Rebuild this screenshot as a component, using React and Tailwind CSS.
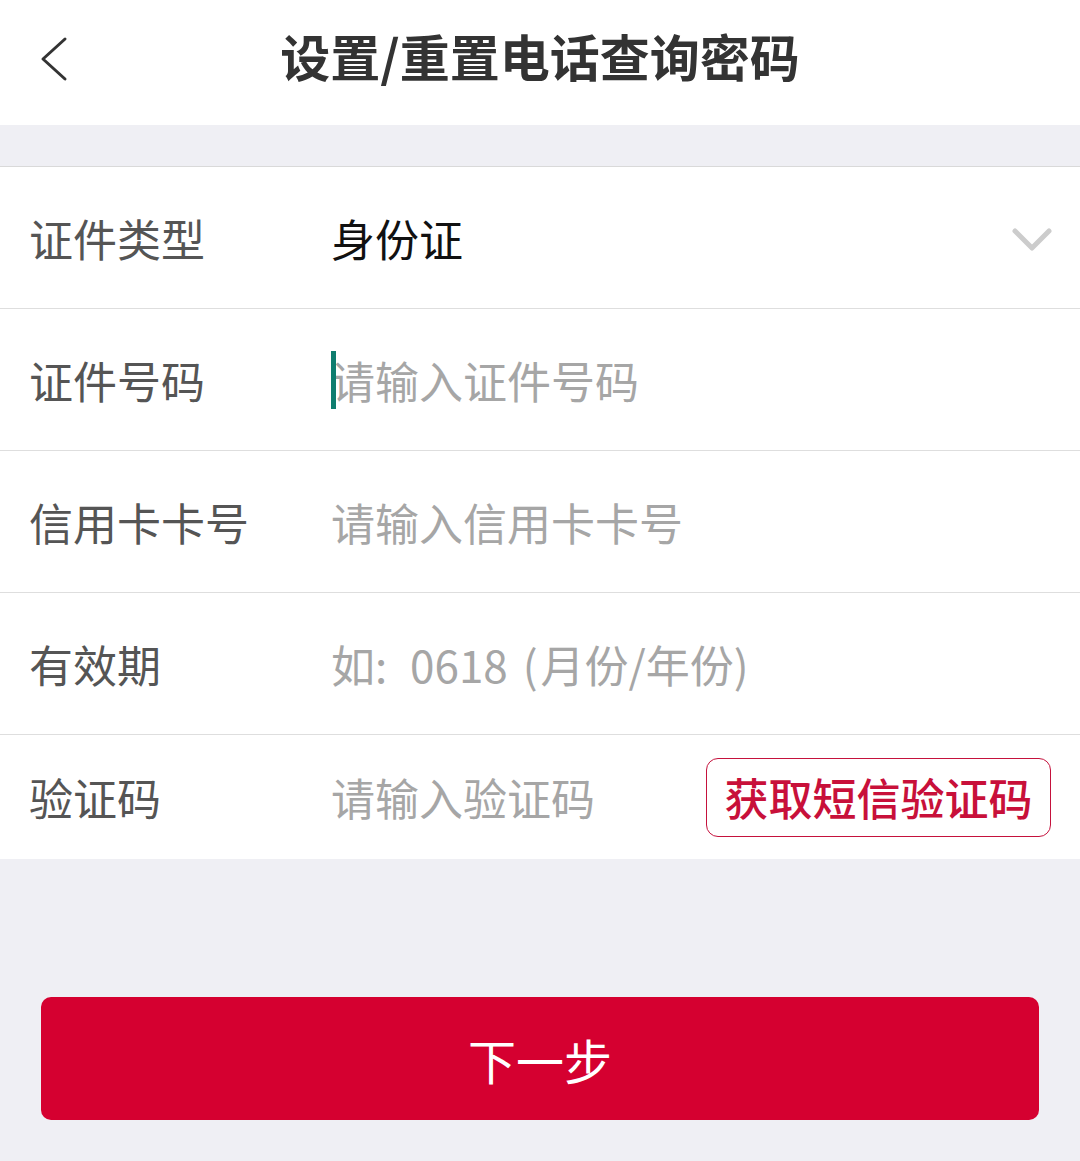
import React from "react";

const font = { fontFamily: '"Noto Sans CJK SC", "Noto Sans", sans-serif' };

function Row({ label, children, last }) {
  return (
    <div
      className={`flex items-center bg-white pl-[29px] ${
        last ? "h-[124px]" : "h-[142px] border-b border-[#dedede]"
      }`}
    >
      <div className="w-[302px] shrink-0 text-[44px] leading-none text-[#555555]">{label}</div>
      <div className="flex-1 flex items-center min-w-0">{children}</div>
    </div>
  );
}

export default function App() {
  return (
    <div className="w-[1080px] h-[1161px] bg-[#efeff4] flex flex-col" style={font}>
      {/* Header */}
      <div className="h-[125px] bg-white relative flex items-center justify-center shrink-0 pb-[15px]">
        <svg
          className="absolute left-[36px] top-[36px]"
          width="34"
          height="46"
          viewBox="0 0 34 46"
          fill="none"
        >
          <path d="M29 3 L7 23 L29 43" stroke="#333" strokeWidth="3" strokeLinecap="round" strokeLinejoin="round" />
        </svg>
        <div className="text-[50px] font-bold text-[#333333] leading-none">设置/重置电话查询密码</div>
      </div>

      {/* Spacer */}
      <div className="h-[42px] shrink-0 border-b border-[#d9d9d9]" />

      {/* Form */}
      <div className="flex flex-col shrink-0">
        <Row label="证件类型">
          <div className="flex-1 text-[44px] leading-none text-[#111111]">身份证</div>
          <svg className="mr-[27px]" width="42" height="30" viewBox="0 0 42 30" fill="none">
            <path d="M4 8 L21 25 L38 8" stroke="#cccccc" strokeWidth="5" strokeLinecap="round" strokeLinejoin="round" />
          </svg>
        </Row>
        <Row label="证件号码">
          <div className="relative flex items-center">
            <span className="absolute left-[0px] top-1/2 -translate-y-1/2 w-[5px] h-[58px] bg-[#0f7d6e]" />
            <span className="text-[44px] leading-none text-[#a6a6a6]">请输入证件号码</span>
          </div>
        </Row>
        <Row label="信用卡卡号">
          <span className="text-[44px] leading-none text-[#a6a6a6] whitespace-pre">
            请输入信用卡卡号
          </span>
        </Row>
        <Row label="有效期">
          <span className="text-[44px] leading-none text-[#a6a6a6] whitespace-pre">
            如: <span className="ml-[13px]">0618</span> <span className="ml-[5px]">(</span>
            <span className="ml-[3px]">月份/年份</span>)
          </span>
        </Row>
        <Row label="验证码" last>
          <span className="flex-1 text-[44px] leading-none text-[#a6a6a6]">请输入验证码</span>
          <div className="mr-[29px] w-[345px] h-[79px] rounded-[12px] border border-[#c5123d] flex items-center justify-center">
            <span className="text-[44px] leading-none text-[#c8103a] font-medium">获取短信验证码</span>
          </div>
        </Row>
      </div>

      {/* Bottom */}
      <div className="flex-1 px-[41px] pt-[138px]">
        <div className="h-[123px] rounded-[10px] bg-[#d50030] flex items-center justify-center">
          <span className="text-[48px] leading-none text-white">下一步</span>
        </div>
      </div>
    </div>
  );
}
